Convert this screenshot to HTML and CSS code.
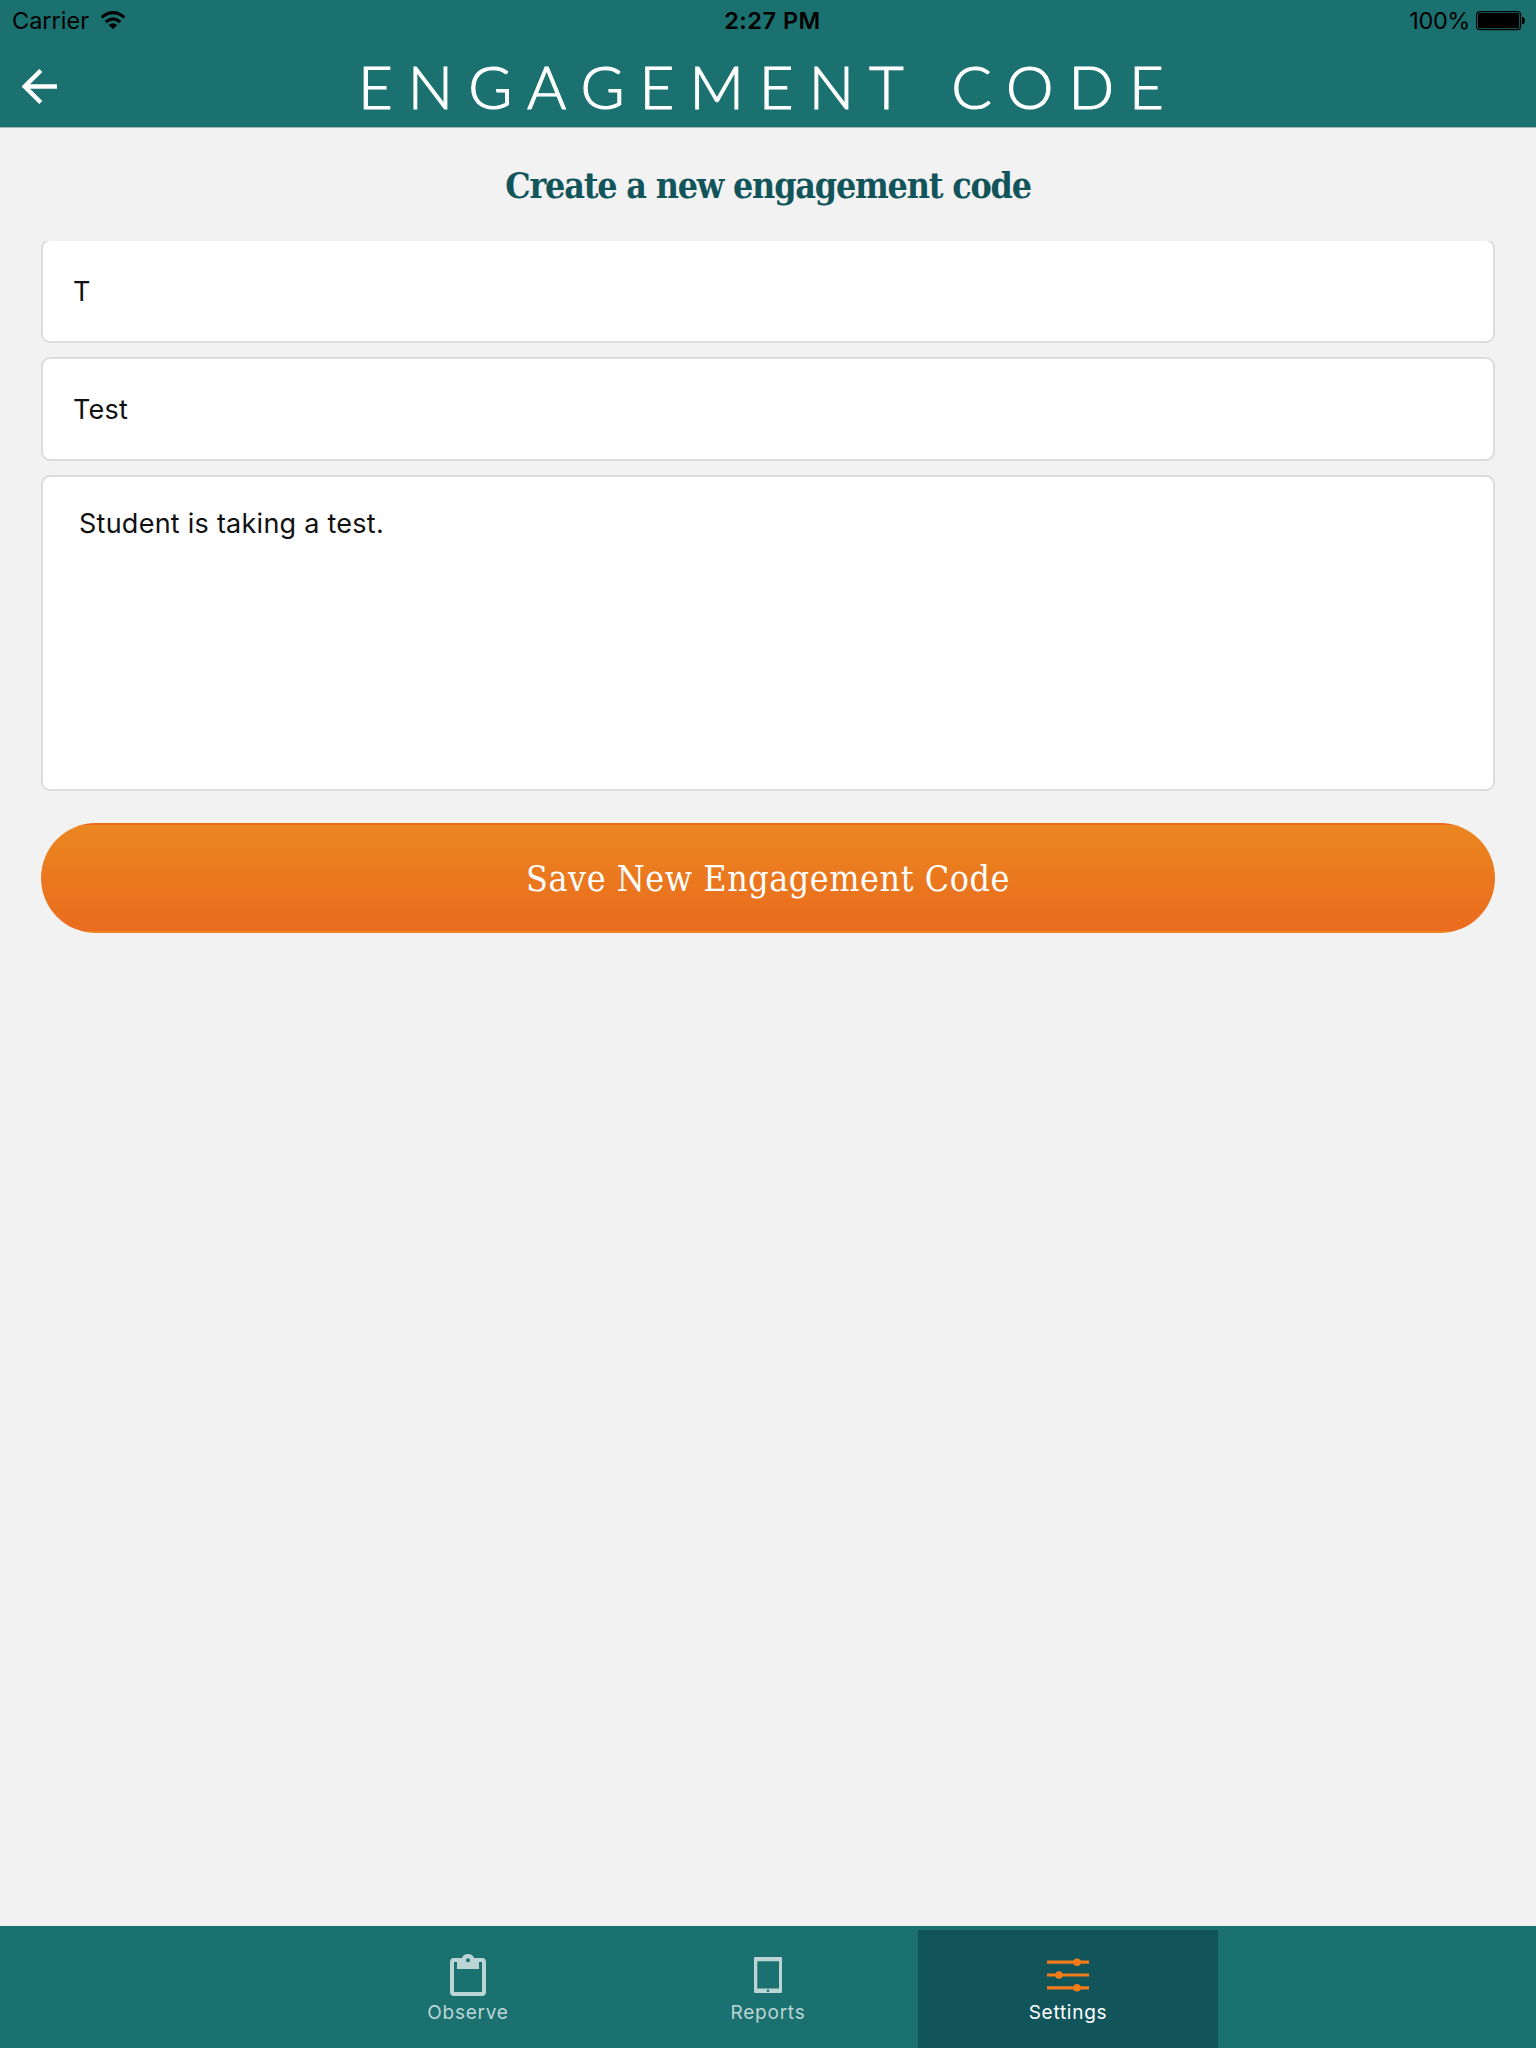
FILE: index.html
```html
<!DOCTYPE html>
<html lang="en">
<head>
<meta charset="utf-8">
<title>Engagement Code</title>
<link rel="stylesheet" href="styles.css">
</head>
<body>
<div class="app">
  <header class="header">
    <div class="status">
      <div class="status-left"><span class="carrier">Carrier</span>
        <svg class="wifi" width="26" height="20" viewBox="0 0 26 20"><path fill="none" stroke="#000" stroke-width="3" d="M1.6 6.4Q13-3.1 24.4 6.4M5.7 11Q13 4.8 20.3 11"/><path d="M8.7 13.9Q13 10.4 17.3 13.9L13 18.3Z"/></svg>
      </div>
      <div class="time">2:27 PM</div>
      <div class="status-right"><span class="percent">100%</span>
        <svg class="battery" width="50" height="20" viewBox="0 0 50 20"><rect x=".6" y=".6" width="44" height="18" rx="3" fill="none" stroke="#000" stroke-width="1.2"/><rect x="2" y="2" width="41.2" height="15.2" rx="1.5"/><path d="M46 6h1.2q1.8 1 1.8 3.5T47.200 13H46z"/></svg>
      </div>
    </div>
    <div class="titlebar">
      <button class="back" aria-label="Back"><svg width="36" height="36" viewBox="0 0 36 36"><path fill="none" stroke="#fff" stroke-width="4.4" d="M18.800 1.500L2.700 17.500l16.100 16M35 17.500H4"/></svg></button>
      <h1 class="title">ENGAGEMENT CODE</h1>
    </div>
  </header>
  <main class="content">
    <h2 class="heading"><span>Create a new engagement code</span></h2>
    <form class="form">
      <div class="field field-first">T</div>
      <div class="field">Test</div>
      <div class="field field-area">Student is taking a test.</div>
      <button class="save" type="button"><span>Save New Engagement Code</span></button>
    </form>
  </main>
  <nav class="tabs">
    <div class="tab">
      <svg class="icon" width="42" height="42" viewBox="0 0 42 42"><path fill="currentColor" fill-rule="evenodd" d="M7 4H15C16 1.500 18 0 21 0s5 1.500 6 4h8q4 0 4 4v30q0 4-4 4H7q-4 0-4-4V8Q3 4 7 4ZM7 8v30h28V8h-3v7H10V8ZM21 4.300a2 2 0 1 0 0 4a2 2 0 1 0 0-4Z"/></svg>
      <span>Observe</span>
    </div>
    <div class="tab">
      <svg class="icon" width="42" height="42" viewBox="0 0 42 42"><path fill="currentColor" fill-rule="evenodd" d="M8 3H34q1 0 1 1V38q0 1-1 1H8q-1 0-1-1V4q0-1 1-1ZM10.300 7.300V34.500H32V7.300ZM21 35.500a1.300 1.300 0 1 0 0 2.600a1.300 1.300 0 1 0 0-2.600Z"/></svg>
      <span>Reports</span>
    </div>
    <div class="tab tab-active">
      <svg class="icon" width="42" height="42" viewBox="0 0 42 42"><path stroke="currentColor" stroke-width="3.200" d="M0 8.200h42M0 21h42M0 33.800h42"/><g fill="currentColor"><circle cx="30" cy="8.200" r="3.800"/><circle cx="12" cy="21" r="3.800"/><circle cx="30" cy="33.800" r="3.800"/></g></svg>
      <span>Settings</span>
    </div>
  </nav>
</div>
</body>
</html>
```
FILE: styles.css
```css
* { box-sizing: border-box; }
body { margin: 0; background: #f2f2f2; color: #111; font-family: Inter, "Liberation Sans", sans-serif; }
h1, h2 { margin: 0; }
button { border: 0; padding: 0; background: none; font: inherit; }
svg { display: block; flex: none; }
.app { width: 1536px; height: 2048px; display: flex; flex-direction: column; }

.header { height: 128px; background: #1b7170; border-bottom: 1px solid #a9b4b4; }
.status { height: 40px; display: grid; grid-template-columns: 1fr auto 1fr; padding: 0 10px 0 12px; color: #000; font-size: 23.500px; line-height: 41px; }
.status-left, .status-right { display: flex; align-items: flex-start; }
.status-left { gap: 11px; }
.status-right { justify-content: flex-end; gap: 6px; }
.percent { letter-spacing: -.4px; }
.wifi, .battery { margin-top: 11px; }
.time { font-weight: 600; letter-spacing: .5px; padding-left: 7px; }
.titlebar { height: 87px; display: grid; grid-template-columns: 80px 1fr 80px; }
.back { height: 36px; width: 36px; margin: 29px 0 0 22px; }
.title { padding-left: 1px; color: #fff; font: 300 60px/92px Lato, "Open Sans", sans-serif; letter-spacing: 15px; word-spacing: 3px; white-space: nowrap; text-align: center; -webkit-text-stroke: 1.100px #fff; }

.content { flex: 1; padding: 0 41px; }
.heading { height: 111px; text-align: center; color: #11555b; font: 700 35.500px/115px "Roboto Slab", "DejaVu Serif Condensed", "DejaVu Serif", serif; letter-spacing: -1.200px; white-space: nowrap; }
.form { display: flex; flex-direction: column; gap: 14px; }
.field { height: 104px; border: 2px solid #dcdcdc; border-radius: 9px; background: #fff; padding: 0 30px; font-size: 27px; line-height: 101px; letter-spacing: .25px; }
.field-first { clip-path: inset(2px 0 0 0); }
.field-area { height: 316px; padding: 0 36px; line-height: 93px; }
.save { height: 110px; margin-top: 18px; border: 2px solid transparent; border-radius: 55px; background: linear-gradient(#eb8620, #ea6b1e); color: #fff; font: 400 35.500px/108px "Roboto Slab", "DejaVu Serif Condensed", "DejaVu Serif", serif; letter-spacing: .550px; white-space: nowrap; }
.save span { display: block; padding-top: 1px; line-height: 105px; }

.tabs { height: 122px; padding-top: 4px; background: #1b7170; display: flex; justify-content: center; }
.tab { width: 300px; padding-top: 24px; display: flex; flex-direction: column; align-items: center; color: #bbd5d5; font-size: 19px; line-height: 24px; letter-spacing: .750px; }
.tab span { margin-top: 5px; }
.tab-active { background: #11555b; color: #f27b1a; }
.tab-active span { color: #fff; }
```
